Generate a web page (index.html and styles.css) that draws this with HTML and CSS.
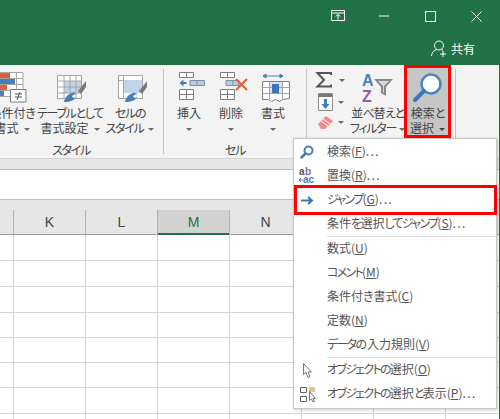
FILE: index.html
```html
<!DOCTYPE html>
<html>
	<head>
		<meta charset="utf-8">
		<title>Excel</title>
		<link rel="stylesheet" href="styles.css">
	</head>
	<body>
		<div class="titlebar">
			<div class="winctl">
				<div class="ctl"><svg width="14" height="12" viewBox="0 0 14 12"><path d="M.5 .5h13v10h-13zM.5 3h13M7 9.500V4.500M4.800 6.500L7 4.300l2.200 2.200" fill="none" stroke="#fff"/></svg></div>
				<div class="ctl"><svg width="10" height="2" viewBox="0 0 10 2"><path d="M0 1h10" stroke="#fff"/></svg></div>
				<div class="ctl"><svg width="11" height="11" viewBox="0 0 11 11"><path d="M.5 .5h10v10H.5z" fill="none" stroke="#fff"/></svg></div>
				<div class="ctl"><svg width="11" height="11" viewBox="0 0 11 11"><path d="M.5 .5l10 10M10.500 .5l-10 10" stroke="#fff" fill="none"/></svg></div>
			</div>
			<div class="share">
				<svg width="16" height="17" viewBox="0 0 16 17"><circle cx="8" cy="5.500" r="4.500" fill="none" stroke="#fff"/><path d="M.5 16c.3-3.500 2.500-6 5.500-6.500M10.500 9.500l1.500 1M9 14h6M12 11v6" fill="none" stroke="#fff"/></svg>
				<span>共有</span>
			</div>
		</div>
		<div class="app">
			<div class="ribbon">
				<div class="group group-style">
					<div class="btns">
						<div class="btn cond">
							<div class="ico"><svg width="29" height="30" viewBox="0 0 29 30"><path d="M-3 .5h28v24H-3zM-3 6.500h28M-3 12.500h28M-3 18.500h28M5.500 0v24M18.500 0v24" fill="#fff" stroke="#a6a6a6"/><path d="M0 1h12v5H0zM0 13h9v5H0z" fill="#e0603a"/><path d="M0 7h17v5H0zM0 19h6v5H0z" fill="#4a7ebb"/><path d="M12.500 17.500h15.500v12.500H12.500z" fill="#fff" stroke="#7f7f7f"/><path d="M17 22h7M17 25h7M22 20l-3 8" stroke="#555" fill="none"/></svg></div>
							<div class="lbl">条件付<span class="k">き</span><br>書式<i class="caret"></i></div>
						</div>
						<div class="btn table">
							<div class="ico"><svg width="30" height="30" viewBox="0 0 30 30"><path d="M.5 3.500h24v23H.5z" fill="#fff" stroke="#a6a6a6"/><path d="M7 9h17v12H7z" fill="#c0d3e8"/><path d="M.5 9h24M.5 15h24M.5 21h24M7 3v24M13 3v24M19 3v24" stroke="#a6a6a6" fill="none"/><path d="M21 19l8-10v6l-5 7z" fill="#7a7a7a"/><path d="M7 30c1-5 4-8 8-9 3-1 5 1 4 4-1 3-6 5-12 5z" fill="#4a7ebb"/><path d="M15 24a2 2 0 1 0 3-2" fill="#fff"/></svg></div>
							<div class="lbl"><span class="k">テーブルとして</span><br>書式設定<i class="caret"></i></div>
						</div>
						<div class="btn cell">
							<div class="ico"><svg width="30" height="30" viewBox="0 0 30 30"><path d="M.5 3.500h24v23H.5z" fill="#fff" stroke="#a6a6a6"/><path d="M6 8h18v13H6z" fill="#c0d3e8"/><path d="M.5 8.500h5M5.500 3v23" stroke="#a6a6a6" fill="none"/><path d="M21 19l8-10v6l-5 7z" fill="#7a7a7a"/><path d="M7 30c1-5 4-8 8-9 3-1 5 1 4 4-1 3-6 5-12 5z" fill="#4a7ebb"/><path d="M15 24a2 2 0 1 0 3-2" fill="#fff"/></svg></div>
							<div class="lbl"><span class="k">セルの</span><br><span class="k">スタイル</span><i class="caret"></i></div>
						</div>
					</div>
					<div class="grp-name"><span class="k">スタイル</span></div>
				</div>
				<div class="sep"></div>
				<div class="group group-cell">
					<div class="btns">
						<div class="btn narrow">
							<div class="ico"><svg width="27" height="28" viewBox="0 0 27 28"><path d="M.5 .5h14v5H.5zM7.500 0v5M.5 17.500h14v10H.5zM.5 22.500h14M7.500 17v11" fill="#fff" stroke="#7f7f7f"/><path d="M11 8.500h14.500v5H11zM18 8v6" fill="#b8cde4" stroke="#7f8fa3"/><path d="M.5 11l4-3.500v2.500h3v2h-3v2.500z" fill="#4a7ebb"/></svg></div>
							<div class="lbl"><span>挿入</span><br><i class="caret solo"></i></div>
						</div>
						<div class="btn narrow">
							<div class="ico"><svg width="29" height="28" viewBox="0 0 29 28"><path d="M.5 .5h14v5H.5zM7.500 0v5M.5 17.500h14v10H.5zM.5 22.500h14M7.500 17v11" fill="#fff" stroke="#7f7f7f"/><path d="M6 8.500h13v5H6zM13 8v6" fill="#b8cde4" stroke="#7f8fa3"/><path d="M16 7l11 11M27 7L16 18" stroke="#e0603a" stroke-width="2" fill="none"/></svg></div>
							<div class="lbl"><span>削除</span><br><i class="caret solo"></i></div>
						</div>
						<div class="btn narrow">
							<div class="ico"><svg width="28" height="30" viewBox="0 0 28 30"><path d="M1 4h20M1 4l3-2v4zM21 4l-3-2v4z" stroke="#4a7ebb" fill="#4a7ebb"/><path d="M.5 9.500h27v17l-7 1-3 2-4-2-4 2-3-2h-6z" fill="#fff" stroke="#7f7f7f"/><path d="M.5 15.500h27M.5 21.500h27M7.500 9v18M20.500 9v18" stroke="#a6a6a6" fill="none"/><path d="M8 10h12v12H8z" fill="#4a7ebb" opacity=".2"/><path d="M10 12h7v9h-7z" fill="#3f75b5"/></svg></div>
							<div class="lbl"><span>書式</span><br><i class="caret solo"></i></div>
						</div>
					</div>
					<div class="grp-name"><span class="k">セル</span></div>
				</div>
				<div class="sep"></div>
				<div class="group group-edit">
					<div class="stack">
						<div class="stack-row"><svg width="16" height="16" viewBox="0 0 16 16"><path d="M15 3V1H1.500l6.500 7-6.500 6.500H15v-2" fill="none" stroke="#555" stroke-width="2"/></svg><i class="caret solo"></i></div>
						<div class="stack-row inset"><svg width="15" height="18" viewBox="0 0 15 18"><path d="M.5 .5h14v17H.5z" fill="#fff" stroke="#8c8c8c"/><path d="M1 1h13v3H1z" fill="#777"/><path d="M6 6h3v5h2.500l-4 5-4-5H6z" fill="#3f7fc4"/></svg><i class="caret solo"></i></div>
						<div class="stack-row inset"><svg width="15" height="13" viewBox="0 0 15 13"><path d="M0 8l8-8 7 5-8 8H3z" fill="#ef8a8f"/><path d="M3 5l7 5M5 3l7 5" stroke="#fff"/></svg><i class="caret solo"></i></div>
					</div>
					<div class="btn sort">
						<div class="ico"><svg width="31" height="31" viewBox="0 0 31 31"><text x="0" y="14" class="az-a">A</text><text x="0" y="30" class="az-z">Z</text><path d="M12 7h19l-7 8v9l-5-3v-6z" fill="#8a8a8a"/><path d="M16 9h11l-5 5v7l-1-1v-6z" fill="#d9d9d9"/></svg></div>
						<div class="lbl">並<span class="k">べ</span>替<span class="k">えと</span><br><span class="k">フィルター</span><i class="caret"></i></div>
					</div>
					<div class="btn find">
						<div class="ico"><svg width="30" height="30" viewBox="0 0 30 30"><circle cx="18" cy="11" r="9.500" fill="#fff" stroke="#4a86c5" stroke-width="2.500"/><path d="M11 18L2 27" stroke="#3f78b8" stroke-width="4" stroke-linecap="round"/></svg></div>
						<div class="lbl">検索<span class="k">と</span><br>選択<i class="caret dark"></i></div>
					</div>
				</div>
				<div class="sep"></div>
			</div>
			<div class="band"></div>
			<div class="formula"></div>
			<div class="band2"></div>
			<div class="heads">
				<div class="head first"></div>
				<div class="head">K</div>
				<div class="head">L</div>
				<div class="head on">M</div>
				<div class="head">N</div>
				<div class="head">O</div>
			</div>
			<div class="sheet">
				<div class="row"></div>
				<div class="row"></div>
				<div class="row"></div>
				<div class="row low"></div>
				<div class="row low"></div>
				<div class="row low"></div>
				<div class="row"></div>
				<div class="row"></div>
			</div>
		</div>
		<div class="menu">
			<div class="item"><div class="mi"><svg class="nudge1" width="14" height="14" viewBox="0 0 14 14"><circle cx="8.500" cy="5.500" r="4" fill="#fff" stroke="#4a7ebb" stroke-width="2"/><path d="M5.500 8.500L1.500 12.500" stroke="#3f78b8" stroke-width="2.500" stroke-linecap="round"/></svg></div>検索(<u>F</u>)<span class="dots">...</span></div>
			<div class="item"><div class="mi"><svg width="17" height="16" viewBox="0 0 17 16"><text x="0" y="7" class="r-a">a</text><text x="6" y="7" class="r-b">b</text><text x="4" y="15" class="r-c">ac</text><path d="M4 12H0M2 10l-2 2 2 2" stroke="#4a7ebb" fill="none"/></svg></div>置換(<u>R</u>)<span class="dots">...</span></div>
			<div class="item marked"><div class="mi"><svg class="nudge2" width="13" height="9" viewBox="0 0 13 9"><path d="M0 4.500h10M7 1l4 3.500L7 8" fill="none" stroke="#3f75b5" stroke-width="2"/></svg></div><span class="k">ジャンプ</span>(<u>G</u>)<span class="dots">...</span></div>
			<div class="item"><div class="mi"></div>条件<span class="k">を</span>選択<span class="k">してジャンプ</span>(<u>S</u>)<span class="dots">...</span></div>
			<div class="msep"></div>
			<div class="item"><div class="mi"></div>数式(<u>U</u>)</div>
			<div class="item"><div class="mi"></div><span class="k">コメント</span>(<u>M</u>)</div>
			<div class="item"><div class="mi"></div>条件付き書式(<u>C</u>)</div>
			<div class="item"><div class="mi"></div>定数(<u>N</u>)</div>
			<div class="item"><div class="mi"></div><span class="k">データ</span>の入力規則(<u>V</u>)</div>
			<div class="msep"></div>
			<div class="item"><div class="mi"><svg class="nudge4" width="10" height="15" viewBox="0 0 10 15"><path d="M.5 .5v11l2.500-2 2 5 2-1-2-4.500h3.500z" fill="#fff" stroke="#777"/></svg></div><span class="k">オブジェクトの</span>選択(<u>O</u>)</div>
			<div class="item"><div class="mi"><svg class="nudge1" width="16" height="15" viewBox="0 0 16 15"><path d="M.5 .5h6v5h-6zM.5 9.500h6v5h-6z" fill="#fff" stroke="#666"/><path d="M9 0h6v5H9z" fill="#e3c48a"/><path d="M9.500 4.500v9l2-1.500 1.500 3 1.500-.5-1.500-3h2.500z" fill="#fff" stroke="#777"/></svg></div><span class="k">オブジェクトの</span>選択<span class="k">と</span>表示(<u>P</u>)<span class="dots">...</span></div>
		</div>
	</body>
</html>
```

FILE: styles.css
```css
html, body{
	margin: 0;
	padding: 0;
	height: 419px;
	overflow: hidden;
	background-color: #ffffff;
}
body{
	position: relative;
	font-family: "Noto Sans CJK JP", "Liberation Sans", sans-serif;
	font-size: 12px;
	font-feature-settings: "palt";
	color: #444444;
}
svg{
	display: block;
	overflow: visible;
}
.titlebar{
	background-color: #217346;
	height: 65px;
}
.winctl{
	display: flex;
	justify-content: flex-end;
	height: 32px;
	padding-right: 1px;
}
.ctl{
	width: 46px;
	display: flex;
	align-items: center;
	justify-content: center;
}
.share{
	display: flex;
	justify-content: flex-end;
	align-items: center;
	gap: 4px;
	padding-right: 25px;
	height: 33px;
	color: #ffffff;
	font-size: 12px;
}
.app{
	border-right: 1px solid #217346;
}
.ribbon{
	display: flex;
	background-color: #f3f3f3;
	height: 93px;
	margin-left: -21px;
}
.group{
	display: flex;
	flex-direction: column;
}
.group-style{
	width: 184px;
}
.group-cell{
	width: 142px;
}
.group-edit{
	flex-direction: row;
	width: 148px;
	padding-left: 4px;
	box-sizing: border-box;
}
.btns{
	display: flex;
	height: 73px;
}
.sep{
	width: 1px;
	height: 85px;
	margin-top: 4px;
	background-color: #c6c6c6;
}
.grp-name{
	text-align: center;
	line-height: 15px;
	margin-top: 4px;
}
.btn{
	display: flex;
	flex-direction: column;
	align-items: center;
	text-align: center;
	height: 73px;
	white-space: nowrap;
}
.ico{
	height: 34px;
	padding-top: 7px;
	box-sizing: border-box;
	flex-shrink: 0;
}
.lbl{
	line-height: 15px;
	padding-top: 6px;
}
.k{
	letter-spacing: -1.3px;
}
.cond{
	width: 58px;
	padding-left: 8px;
	box-sizing: border-box;
}
.table{
	width: 66px;
}
.table .ico{
	margin-left: 4px;
}
.cell{
	width: 54px;
}
.cell .ico{
	margin-left: 5px;
}
.narrow{
	width: 42px;
	padding-left: 8px;
	box-sizing: border-box;
}
.narrow .ico{
	margin-left: 6px;
}
.stack{
	width: 40px;
	padding: 7px 0 0 5px;
	box-sizing: border-box;
	display: flex;
	flex-direction: column;
	gap: 5px;
}
.stack-row{
	display: flex;
	align-items: center;
	gap: 7px;
}
.stack-row.inset{
	margin-left: 2px;
	gap: 5px;
}
.sort{
	width: 53px;
}
.sort .lbl{
	letter-spacing: -0.6px;
}
.sort .caret{
	margin-left: 3px;
}
.find{
	width: 47px;
	box-sizing: border-box;
	border: 3px solid #ff0000;
	background-color: #c6c6c6;
}
.find .ico{
	padding-top: 5px;
	height: 31px;
}
.caret{
	display: inline-block;
	width: 0;
	height: 0;
	margin-left: 5px;
	vertical-align: middle;
	border-top: 3px solid #6a6a6a;
	border-left: 3px solid transparent;
	border-right: 3px solid transparent;
}
.caret.solo{
	margin-left: 0;
}
.caret.dark{
	border-top-color: #444444;
}
.band{
	height: 11px;
	box-sizing: border-box;
	background-color: #e6e6e6;
	border-top: 1px solid #d4d4d4;
}
.formula{
	height: 31px;
	box-sizing: border-box;
	background-color: #ffffff;
	border-top: 1px solid #bfbfbf;
	border-bottom: 1px solid #bfbfbf;
}
.band2{
	height: 10px;
	background-color: #e6e6e6;
}
.heads{
	display: flex;
	height: 25px;
	box-sizing: border-box;
	border-bottom: 1px solid #9f9f9f;
	background-color: #e6e6e6;
	font-family: "Liberation Sans", sans-serif;
	font-size: 14px;
}
.head{
	width: 72px;
	flex-shrink: 0;
	box-sizing: border-box;
	border-right: 1px solid #b0b0b0;
	text-align: center;
	line-height: 24px;
	color: #444444;
}
.head.first{
	width: 14px;
}
.head.on{
	background-color: #d2d2d2;
	color: #217346;
	box-shadow: inset 0 -2px 0 #217346;
	margin-bottom: -1px;
}
.sheet{
	height: 185px;
	overflow: hidden;
}
.row{
	height: 26px;
	box-sizing: border-box;
	border-bottom: 1px solid #d4d4d4;
	background-image: repeating-linear-gradient(to right, #d4d4d4 0, #d4d4d4 1px, transparent 1px, transparent 72px);
	background-position: 13px 0;
}
.row.low{
	height: 25px;
}
.menu{
	position: absolute;
	left: 293px;
	top: 138px;
	width: 204px;
	height: 271px;
	box-sizing: border-box;
	padding-top: 1px;
	background-color: #ffffff;
	border: 1px solid #c6c6c6;
	box-shadow: 1px 1px 3px rgba(0,0,0,0.2);
	color: #555555;
}
.menu .k{
	letter-spacing: -1.7px;
}
.item{
	position: relative;
	display: flex;
	align-items: center;
	height: 24px;
	box-sizing: border-box;
	padding-bottom: 3px;
	white-space: nowrap;
}
.dots{
	letter-spacing: 1.4px;
}
.mi{
	width: 33px;
	padding-left: 5px;
	margin-top: 3px;
	box-sizing: border-box;
	flex-shrink: 0;
}
.nudge1{
	margin-left: 1px;
}
.nudge2{
	margin-left: 2px;
}
.nudge4{
	margin-left: 4px;
}
.msep{
	height: 1px;
	margin-left: 33px;
	background-color: #e0e0e0;
}
.marked::after{
	content: "";
	position: absolute;
	left: 0;
	right: -1px;
	top: -3px;
	bottom: -3px;
	border: 3px solid #ff0000;
}
.az-a{
	font: bold 16px "Liberation Sans", sans-serif;
	fill: #4a7ebb;
}
.az-z{
	font: bold 16px "Liberation Sans", sans-serif;
	fill: #8e5fa8;
}
.r-a, .r-b, .r-c{
	font: bold 10px "Liberation Sans", sans-serif;
}
.r-a{
	fill: #555555;
}
.r-b{
	fill: #8e5fa8;
}
.r-c{
	fill: #4a7ebb;
}
```
